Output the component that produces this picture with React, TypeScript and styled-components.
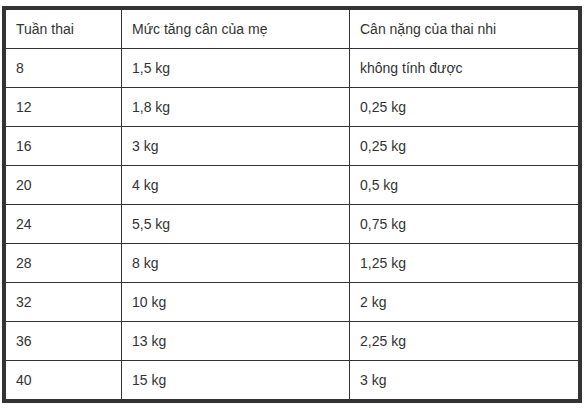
import React from "react";
import styled, { createGlobalStyle } from "styled-components";

const GlobalStyle = createGlobalStyle`
  html, body {
    margin: 0;
    padding: 0;
    background: #ffffff;
  }
  body {
    font-family: "Liberation Sans", Arial, sans-serif;
  }
`;

const Wrap = styled.div`
  padding: 6px 2px 0 2px;
`;

const Table = styled.table`
  width: 580px;
  border-collapse: separate;
  border-spacing: 0;
  border: 4px solid #333333;
  table-layout: fixed;
  box-sizing: border-box;
`;

const Col = styled.col<{ $width?: number }>`
  width: ${(p) => (p.$width ? `${p.$width}px` : "auto")};
`;

const Cell = styled.td<{ $last?: boolean; $bottom?: boolean }>`
  height: ${(p) => (p.$bottom ? "38px" : "39px")};
  padding: 0 0 0 10px;
  font-size: 14px;
  color: #333333;
  vertical-align: middle;
  border-right: ${(p) => (p.$last ? "none" : "1px solid #333333")};
  border-bottom: ${(p) => (p.$bottom ? "none" : "1px solid #333333")};
  box-sizing: border-box;
`;

const rows = [
  ["Tuần thai", "Mức tăng cân của mẹ", "Cân nặng của thai nhi"],
  ["8", "1,5 kg", "không tính được"],
  ["12", "1,8 kg", "0,25 kg"],
  ["16", "3 kg", "0,25 kg"],
  ["20", "4 kg", "0,5 kg"],
  ["24", "5,5 kg", "0,75 kg"],
  ["28", "8 kg", "1,25 kg"],
  ["32", "10 kg", "2 kg"],
  ["36", "13 kg", "2,25 kg"],
  ["40", "15 kg", "3 kg"],
];

const App = () => {
  return (
    <Wrap>
      <GlobalStyle />
      <Table>
        <colgroup>
          <Col $width={116} />
          <Col $width={228} />
          <Col />
        </colgroup>
        <tbody>
          {rows.map((row, i) => (
            <tr key={i}>
              {row.map((text, j) => (
                <Cell
                  key={j}
                  $last={j === row.length - 1}
                  $bottom={i === rows.length - 1}
                >
                  {text}
                </Cell>
              ))}
            </tr>
          ))}
        </tbody>
      </Table>
    </Wrap>
  );
};

export default App;
